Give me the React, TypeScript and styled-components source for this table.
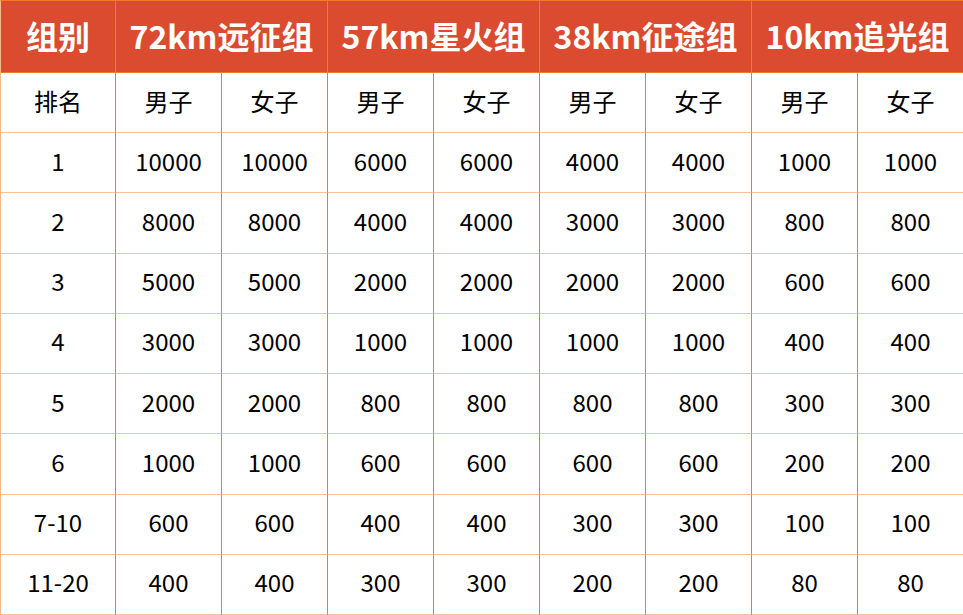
import styled, {createGlobalStyle} from 'styled-components';

const GlobalStyle = createGlobalStyle`
html, body {
  margin: 0;
  padding: 0;
  background: #fff;
}
body {
  font-family: "Noto Sans CJK SC", "Noto Sans", sans-serif;
}
`

const Table = styled.div`
display: grid;
grid-template-columns: 115px repeat(8, 106px);
grid-template-rows: 72px repeat(9, 1fr);
width: 963px;
height: 615px;
box-sizing: border-box;
border-top: 1px solid #ef7d28;
border-left: 1px solid #f6b98a;
`

const HeadCell = styled.div<{span?: number}>`
grid-column: span ${p => p.span || 1};
display: flex;
align-items: center;
justify-content: center;
background: #db4b2f;
color: #fff;
font-weight: bold;
font-size: 32px;
border-right: 1px solid #ef7d28;
border-bottom: 1px solid #ef7d28;
box-sizing: border-box;
padding-bottom: 4px;
`

const Cell = styled.div`
display: flex;
align-items: center;
justify-content: center;
color: #000;
font-size: 24px;
border-right: 1px solid #ef7d28;
border-bottom: 1px solid #f8c39a;
box-sizing: border-box;
padding-bottom: 5px;
`

const groups = ['72km远征组', '57km星火组', '38km征途组', '10km追光组'];

const rows: [string, number[]][] = [
  ['1', [10000, 6000, 4000, 1000]],
  ['2', [8000, 4000, 3000, 800]],
  ['3', [5000, 2000, 2000, 600]],
  ['4', [3000, 1000, 1000, 400]],
  ['5', [2000, 800, 800, 300]],
  ['6', [1000, 600, 600, 200]],
  ['7-10', [600, 400, 300, 100]],
  ['11-20', [400, 300, 200, 80]],
];

export default function App() {
  return (
    <>
      <GlobalStyle />
      <Table>
        <HeadCell>组别</HeadCell>
        {groups.map(g => <HeadCell key={g} span={2}>{g}</HeadCell>)}
        <Cell>排名</Cell>
        {groups.map(g => [
          <Cell key={g + 'm'}>男子</Cell>,
          <Cell key={g + 'f'}>女子</Cell>,
        ])}
        {rows.map(([rank, vals]) => [
          <Cell key={rank}>{rank}</Cell>,
          ...vals.flatMap((v, i) => [
            <Cell key={rank + i + 'm'}>{v}</Cell>,
            <Cell key={rank + i + 'f'}>{v}</Cell>,
          ]),
        ])}
      </Table>
    </>
  );
}
